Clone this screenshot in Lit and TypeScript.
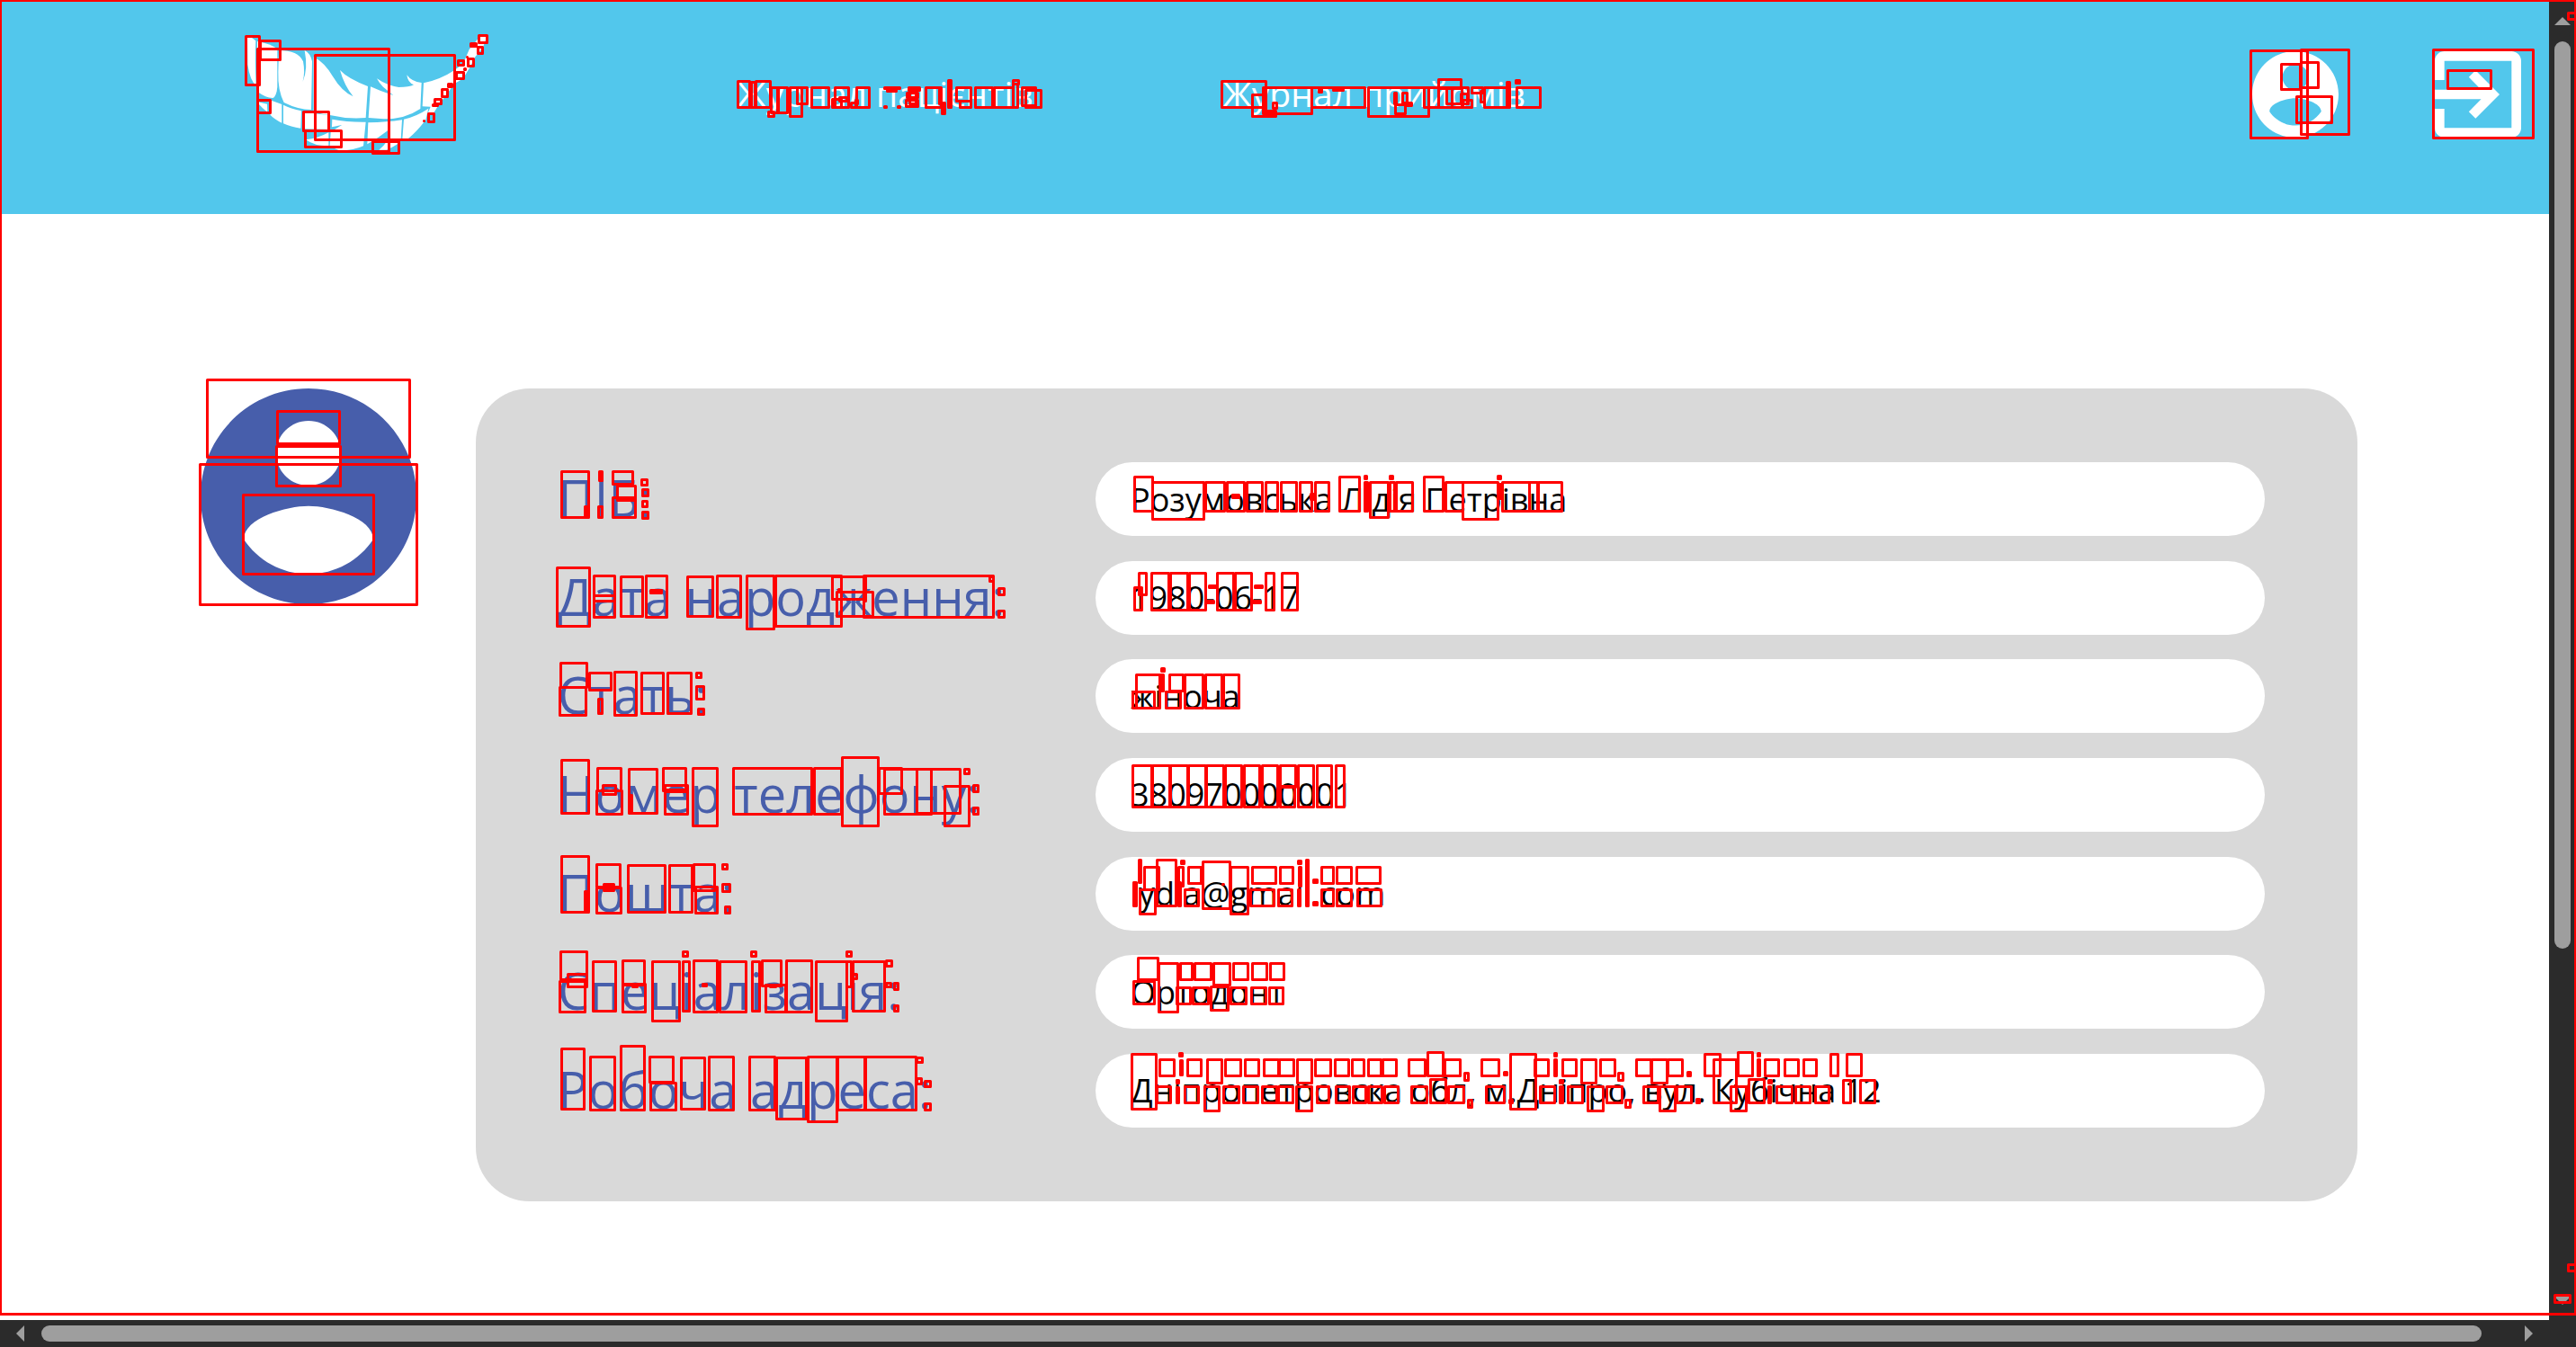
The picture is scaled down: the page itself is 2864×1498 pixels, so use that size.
import { LitElement, html, css, svg } from "lit";
import { customElement, property } from "lit/decorators.js";

const PERSON =
  "M12 2C6.48 2 2 6.48 2 12s4.48 10 10 10 10-4.48 10-10S17.52 2 12 2zm0 3c1.66 0 3 1.34 3 3s-1.34 3-3 3-3-1.34-3-3 1.34-3 3-3zm0 14.2c-2.5 0-4.71-1.28-6-3.22.03-1.99 4-3.08 6-3.08 1.99 0 5.97 1.09 6 3.08-1.29 1.94-3.5 3.22-6 3.22z";
const EXIT =
  "M10.09 15.59L11.5 17l5-5-5-5-1.41 1.41L12.67 11H3v2h9.67l-2.58 2.59zM19 3H5c-1.11 0-2 .9-2 2v4h2V5h14v14H5v-4H3v4c0 1.1.89 2 2 2h14c1.1 0 2-.9 2-2V5c0-1.1-.9-2-2-2z";

const TEETH = [
  "M225 125L240 126L253 136Q250 200 254 284Q234 270 226 215Z",
  "M258 138Q300 146 325 162V290Q322 322 310 327Q285 325 262 308L256 270Z",
  "M330 168Q395 168 411 205Q418 240 410 272Q428 230 416 168Q436 178 441 205L438 366Q395 366 347 342Q326 300 328 240Z",
  "M446 190Q482 208 510 255Q540 305 578 322Q548 285 534 234Q560 262 627 288L620 393Q560 398 500 384Q460 380 446 370Z",
  "M636 289Q670 305 712 318Q690 300 678 290Q664 276 657 262Q690 285 730 291Q765 291 780 283Q760 276 757 250Q772 272 806 276L802 363Q750 398 680 397L629 393Z",
  "M813 277Q870 265 916 234L945 212L965 165L1000 122L1026 118L1010 160L985 190L970 220L945 262L915 280L890 315L862 352L842 384L826 380L836 356L809 355Z",
  "M260 340L291 347L292 374Q274 360 260 344Z",
  "M298 338L301 334L340 348V410Q315 398 302 384Z",
  "M345 350Q370 362 405 370L403 428Q370 424 345 412Z",
  "M410 374L495 384V432L410 430Z",
  "M508 398Q560 408 620 407L612 487Q580 502 535 503L500 488L503 440L540 417L507 424Z",
  "M420 466Q460 462 496 442V487Q450 488 420 466Z",
  "M628 409Q690 408 741 400L737 466H700L693 436Q660 462 625 481Z",
  "M664 500Q680 488 690 472L735 474Q710 492 690 500Z",
  "M747 398Q790 388 829 362L820 400Q790 440 762 462L742 464Z",
];

/** A set of outlines: origin of the set, units per pixel, and left/top/right/bottom per box. */
interface OutlineSet {
  x: number;
  y: number;
  ux: number;
  uy: number;
  boxes: string;
}

const OUTLINES: OutlineSet[] = [
  { x: 0, y: 0, ux: 1, uy: 1, boxes: "-1,-1,2865,1463" },
  // logo
  { x: 200, y: 0, ux: 3, uy: 3, boxes: `217,118,269,287 265,132,338,203 256,159,702,510 447,180,921,471 256,331,305,380 408,370,500,440 415,433,542,494 640,469,734,516 994,114,1028,146 967,142,992,160 991,152,1013,182 925,199,952,223 957,193,983,224 919,238,950,266 892,275,912,295 870,294,896,328 847,328,875,350 841,345,865,356 826,376,851,412 809,398,818,407 945,226,956,238 953,186,962,194` },
  // first header link
  { x: 780, y: 60, ux: 3, uy: 3, boxes: `118,87,165,183 162,90,182,183 176,87,233,183 228,108,262,200 220,190,247,212 250,108,290,201 290,108,338,213 316,108,358,170 364,108,428,183 442,108,494,183 432,147,470,183 455,141,488,162 513,108,563,183 510,150,526,170 496,160,520,183 607,108,666,120 615,118,655,130 607,171,621,183 651,171,666,183 687,108,732,125 680,125,725,150 677,150,725,180 690,118,720,170 745,108,805,183 790,115,805,170 799,160,816,204 819,84,838,106 820,92,838,183 847,108,902,162 858,152,902,183 909,108,975,183 972,108,1044,183 1035,84,1062,104 1035,95,1060,183 1066,108,1118,177 1076,117,1136,183` },
  // second header link
  { x: 1320, y: 60, ux: 3, uy: 3, boxes: `111,87,267,183 214,132,267,213 250,108,420,204 264,186,300,212 270,192,294,206 282,160,302,185 411,108,597,183 435,115,453,131 483,115,524,126 600,108,810,213 687,126,703,170 691,165,733,204 714,126,738,168 730,160,752,177 787,108,887,183 835,81,917,119 835,108,920,183 862,108,942,171 910,130,940,170 914,150,955,183 945,108,990,135 975,120,995,165 988,108,1080,183 1062,90,1080,106 1062,95,1080,183 1092,85,1112,101 1095,108,1182,183` },
  // header icons and scroll bar
  { x: 2460, y: 0, ux: 3, uy: 3, boxes: `123,165,321,466 291,162,459,454 225,210,297,303 291,204,357,297 276,317,402,414 732,161,1074,465 780,231,933,300 1182,38,1218,70` },
  { x: 2500, y: 1200, ux: 3, uy: 3, boxes: `1062,615,1098,645 1017,717,1077,750` },
  // avatar
  { x: 200, y: 400, ux: 3, uy: 3, boxes: `87,63,771,330 321,168,537,285 318,285,540,426 63,345,795,822 207,447,651,720` },
  // field names, rows 1-3
  { x: 600, y: 500, ux: 2.904, uy: 3, boxes: `67,69,162,231 143,186,160,230 189,69,205,108 187,186,205,230 232,69,306,119 248,118,313,173 232,156,314,231 326,96,350,122 329,129,353,158 328,168,351,194 329,204,353,233
53,390,165,593 172,417,246,564 172,484,246,509 258,420,338,560 340,417,414,564 354,465,398,482 474,420,563,560 570,417,652,564 665,417,761,602 758,417,978,593 942,420,1056,503 956,471,1079,560 960,462,972,480 1042,417,1470,564 1046,425,1058,510 1450,420,1470,443 1479,460,1503,488 1479,535,1503,563
64,708,156,798 62,790,153,890 158,741,234,806 187,828,205,886 238,738,316,890 326,741,403,886 410,741,493,886 502,740,525,764 503,786,533,836 509,861,533,889` },
  // field names, rows 4-7
  { x: 600, y: 820, ux: 2.904, uy: 3, boxes: `67,72,162,258 183,99,266,182 201,156,249,195 181,174,269,261 286,102,382,258 288,190,301,256 396,99,475,182 401,156,481,261 401,170,481,185 492,99,579,299 622,99,884,261 882,99,980,261 973,63,1097,299 1093,99,1172,191 1110,102,1268,261 1214,102,1361,258 1304,159,1392,299 1369,101,1392,125 1398,157,1421,185 1398,232,1421,260
67,393,162,587 181,420,264,503 204,486,243,516 210,492,236,510 181,499,266,591 143,510,160,585 283,423,409,587 416,423,497,587 494,420,568,517 500,495,577,591 587,421,611,445 588,487,620,518 596,562,620,590
65,711,156,812 86,787,156,838 62,810,152,920 168,744,249,917 264,741,342,830 265,819,345,920 297,828,320,838 360,744,455,950 460,711,481,734 460,744,487,917 494,741,578,920 522,818,542,835 578,744,670,920 680,711,702,734 683,744,714,917 714,741,783,835 726,822,798,920 740,825,766,838 793,741,882,920 889,744,995,950 988,711,1010,734 988,744,1010,836 1007,744,1117,917 1009,787,1027,809 1115,742,1140,767 1115,815,1138,838 1140,817,1163,845 1140,892,1163,919
67,1035,147,1245 160,1062,246,1248 258,1026,342,1248 352,1062,435,1155 355,1149,443,1248 454,1066,536,1244 543,1062,629,1248 674,1062,763,1248 761,1066,865,1278 862,1062,963,1286 958,1062,1054,1248 1048,1062,1220,1248 1214,1064,1239,1088 1214,1135,1238,1160 1241,1144,1265,1171 1241,1219,1265,1248` },
  // field values, rows 1-3
  { x: 1200, y: 500, ux: 2.8, uy: 3, boxes: `168,87,231,210 225,105,391,237 388,105,457,210 457,105,518,210 473,147,500,165 518,105,575,210 577,105,621,210 624,105,679,210 684,105,729,210 716,145,735,170 730,105,781,210 806,87,876,210 885,84,900,101 886,105,902,210 902,105,966,231 963,84,980,101 963,105,985,210 983,105,1041,210 1070,87,1137,210 1136,105,1197,210 1190,105,1308,237 1299,84,1316,101 1304,110,1320,168 1313,105,1405,210 1398,105,1432,210 1426,105,1506,210
182,408,213,489 168,456,198,540 221,408,284,540 280,408,342,540 338,408,397,540 401,450,431,465 396,501,423,516 426,408,484,540 482,408,540,540 543,450,574,465 538,501,568,516 577,408,609,540 627,408,683,540
174,747,254,866 161,804,238,866 252,726,269,744 250,747,266,810 278,747,328,809 267,804,320,866 326,747,390,866 389,747,447,866 445,747,500,866` },
  // field values, rows 4-7
  { x: 1200, y: 820, ux: 3, uy: 3, boxes: `174,90,245,237 239,90,305,237 299,90,365,237 360,90,426,237 420,90,486,237 484,90,545,237 545,90,606,237 606,90,666,237 667,90,725,170 667,160,723,237 726,90,786,237 788,90,847,237 852,90,888,237
195,406,210,490 178,480,194,567 214,429,269,513 199,504,258,593 256,405,327,567 327,429,350,500 336,408,354,426 327,480,341,567 360,429,412,492 349,504,402,567 408,411,507,576 475,485,485,495 501,429,567,593 573,429,660,492 568,504,655,567 666,429,717,492 661,504,714,567 726,408,744,426 728,429,744,500 726,504,741,567 753,405,768,567 778,472,798,490 778,547,798,565 804,429,852,492 804,504,852,567 855,429,911,492 855,504,911,567 921,429,1007,492 924,504,1010,567
192,732,267,812 178,810,255,893 262,750,333,920 333,750,382,812 322,831,376,893 382,750,445,812 376,831,436,893 444,750,507,830 436,828,500,914 510,750,567,812 502,831,560,893 573,750,630,812 571,831,626,893 633,750,687,812 630,831,684,893
171,1053,260,1245 263,1071,321,1134 255,1161,309,1224 330,1050,348,1068 333,1073,348,1132 320,1140,337,1158 321,1163,336,1224 357,1071,411,1134 348,1161,402,1224 423,1071,480,1158 415,1161,471,1250 483,1071,544,1134 478,1161,538,1224 549,1071,603,1134 543,1161,600,1224 612,1071,668,1134 606,1161,663,1224 664,1071,720,1134 660,1161,717,1224 723,1071,780,1158 720,1161,780,1250 783,1071,844,1134 788,1161,838,1224 849,1071,903,1134 852,1161,907,1224 906,1071,954,1134 910,1161,959,1224 960,1071,1012,1134 960,1161,1015,1224 1009,1071,1062,1134 1015,1161,1068,1224 1094,1071,1157,1134 1104,1161,1164,1224 1158,1047,1218,1134 1168,1137,1226,1224 1216,1071,1275,1134 1226,1161,1286,1224 1282,1117,1302,1148 1293,1206,1313,1238` },
  // end of the address
  { x: 1640, y: 1120, ux: 3, uy: 3, boxes: `18,171,85,234 33,261,102,324 93,213,112,232 112,305,130,323 114,153,207,345 196,171,249,234 213,261,270,324 260,150,276,168 261,172,276,234 279,240,297,258 280,262,296,324 288,171,342,234 306,261,362,324 351,171,408,258 372,261,432,351 414,171,471,234 436,261,495,324 475,216,497,248 499,306,522,339 534,171,590,234 558,261,616,324 585,171,645,258 612,261,672,351 640,171,696,234 668,261,725,324 705,213,724,233 735,303,753,323 762,153,822,234 793,171,876,324 849,261,909,351 873,147,930,234 908,238,968,324 939,150,955,168 939,172,954,234 975,240,993,258 975,262,990,324 963,171,1017,234 1002,261,1061,324 1029,171,1083,234 1065,261,1121,324 1092,171,1143,234 1131,261,1185,324 1182,153,1215,234 1224,240,1257,324 1236,153,1294,234 1281,240,1338,324` },
];

/** Joins all boxes into one path; the 3px stroke lies inside each box's outer edge. */
function outlinePath(sets: OutlineSet[]): string {
  return sets
    .flatMap((s) =>
      s.boxes.split(/\s+/).map((box) => {
        const [l, t, r, b] = box.split(",").map(Number);
        const x1 = Math.round(s.x + l / s.ux) + 1.5;
        const y1 = Math.round(s.y + t / s.uy) + 1.5;
        const x2 = Math.max(Math.round(s.x + r / s.ux) - 1.5, x1);
        const y2 = Math.max(Math.round(s.y + b / s.uy) - 1.5, y1);
        return `M${x1} ${y1}H${x2}V${y2}H${x1}Z`;
      }),
    )
    .join("");
}

@customElement("contour-layer")
export class ContourLayer extends LitElement {
  static styles = css`
    :host { display: block; pointer-events: none; }
    .layer { display: block; width: 100%; height: 100%; overflow: hidden; }
    .line { fill: none; stroke: #ff0000; stroke-width: 3; stroke-linejoin: round; stroke-linecap: round; }
  `;
  render() {
    return html`<svg class="layer" aria-hidden="true"><path class="line" d=${outlinePath(OUTLINES)}></path></svg>`;
  }
}

@customElement("site-header")
export class SiteHeader extends LitElement {
  static styles = css`
    :host { display: block; background: #52c7ec; }
    .bar { display: flex; height: 238px; padding: 0 31px 0 270px; align-items: flex-start; }
    .logo { display: block; margin-top: 37px; width: 273px; height: 135px; fill: #fff; }
    .nav { display: grid; grid-template-columns: 540px auto; margin: 78px 0 0 276px; }
    .link { color: #fff; font-size: 39px; line-height: 52px; text-decoration: none; white-space: nowrap; }
    .actions { display: flex; gap: 107px; margin: 57px 0 0 auto; }
    .action { display: block; width: 96px; height: 96px; padding: 0; border: 0; background: none; }
    .icon { display: block; width: 96px; height: 96px; fill: #fff; }
  `;
  render() {
    return html`<header class="bar">
      <a href="#" aria-label="Dental">
        <svg class="logo" viewBox="210 111 819 405">${TEETH.map((d) => svg`<path d=${d}></path>`)}</svg>
      </a>
      <nav class="nav">
        <a class="link" href="#patients">Журнал пацієнтів</a>
        <a class="link" href="#visits">Журнал прийомів</a>
      </nav>
      <div class="actions">
        <button class="action" aria-label="Profile"><svg class="icon" viewBox="2 2 20 20"><path d=${PERSON}></path></svg></button>
        <button class="action" aria-label="Exit"><svg class="icon" viewBox="3 3 18 18"><path d=${EXIT}></path></svg></button>
      </div>
    </header>`;
  }
}

const FIELDS: [string, string, string][] = [
  ["name", "ПІБ:", "Розумовська Лідія Петрівна"],
  ["birth", "Дата народження:", "1980-06-17"],
  ["sex", "Стать:", "жіноча"],
  ["phone", "Номер телефону:", "380970000001"],
  ["mail", "Пошта:", "lydia@gmail.com"],
  ["speciality", "Спеціалізація:", "Ортодонт"],
  ["address", "Робоча адреса:", "Дніпропетровска обл, м.Дніпро, вул. Кубічна 12"],
];

@customElement("profile-card")
export class ProfileCard extends LitElement {
  static styles = css`
    :host { display: block; }
    .card {
      box-sizing: border-box; min-height: 904px; padding: 82px 103px 82px 91px;
      border-radius: 60px; background: #d9d9d9;
      display: flex; flex-direction: column; justify-content: space-between;
    }
    .row { display: grid; grid-template-columns: 598px 1fr; align-items: center; }
    .name { padding-bottom: 4px; color: #475eab; font-size: 56px; line-height: 76px; white-space: nowrap; }
    .value {
      box-sizing: border-box; width: 100%; min-width: 0; height: 82px; padding: 0 39px;
      border: 0; border-radius: 41px; background: #fff; color: #000;
      font-family: inherit; font-size: 36px; outline: none;
    }
  `;
  render() {
    return html`<form class="card">
      ${FIELDS.map(
        ([id, name, value]) => html`<div class="row">
          <label class="name" for=${id}>${name}</label>
          <input class="value" id=${id} type="text" readonly .value=${value} />
        </div>`,
      )}
    </form>`;
  }
}

@customElement("scroll-track")
export class ScrollTrack extends LitElement {
  @property({ reflect: true }) axis = "y";
  @property({ type: Number }) thumb = 1;
  @property({ type: Number }) rest = 1;
  static styles = css`
    :host { display: flex; box-sizing: border-box; background: #2b2b2b; }
    :host([axis="y"]) { flex-direction: column; padding: 19px 6px 17px; }
    :host([axis="x"]) { padding: 6px 18px; }
    .arrow { flex: none; display: block; width: 18px; height: 9px; fill: #9e9e9e; }
    :host([axis="x"]) .arrow { width: 9px; height: 18px; }
    .thumb { border-radius: 9px; background: #9e9e9e; }
    :host([axis="y"]) .thumb { margin-top: 18px; }
    :host([axis="x"]) .thumb { margin-left: 19px; }
  `;
  render() {
    const y = this.axis === "y";
    return html`
      <svg class="arrow" viewBox=${y ? "0 0 18 9" : "0 0 9 18"}><path d=${y ? "M0 9L9 0L18 9Z" : "M9 0L0 9L9 18Z"}></path></svg>
      <div class="thumb" style="flex:${this.thumb} 1 0"></div>
      <div style="flex:${this.rest} 1 0"></div>
      <svg class="arrow" viewBox=${y ? "0 0 18 9" : "0 0 9 18"}><path d=${y ? "M0 0L9 9L18 0Z" : "M0 0L9 9L0 18Z"}></path></svg>
    `;
  }
}

@customElement("app-root")
export class AppRoot extends LitElement {
  static styles = css`
    :host {
      position: relative; display: grid; box-sizing: border-box; min-height: 100vh;
      grid-template-columns: minmax(0, 1fr) 30px; grid-template-rows: 1fr 30px;
      background: #fff; font-family: "Open Sans", "Noto Sans", sans-serif;
    }
    .main { display: flex; align-items: flex-start; gap: 66px; padding: 194px 213px 0 223px; }
    .avatar { flex: none; display: block; width: 240px; height: 240px; fill: #475eab; }
    .card { flex: 1; min-width: 0; }
    .corner { background: #2b2b2b; }
    .contours { position: absolute; inset: 0; }
  `;
  render() {
    return html`
      <div>
        <site-header></site-header>
        <main class="main">
          <svg class="avatar" viewBox="2 2 20 20"><path d=${PERSON}></path></svg>
          <profile-card class="card"></profile-card>
        </main>
      </div>
      <scroll-track axis="y" .thumb=${1009} .rest=${387}></scroll-track>
      <scroll-track axis="x" .thumb=${2714} .rest=${48}></scroll-track>
      <div class="corner"></div>
      <contour-layer class="contours"></contour-layer>
    `;
  }
}
